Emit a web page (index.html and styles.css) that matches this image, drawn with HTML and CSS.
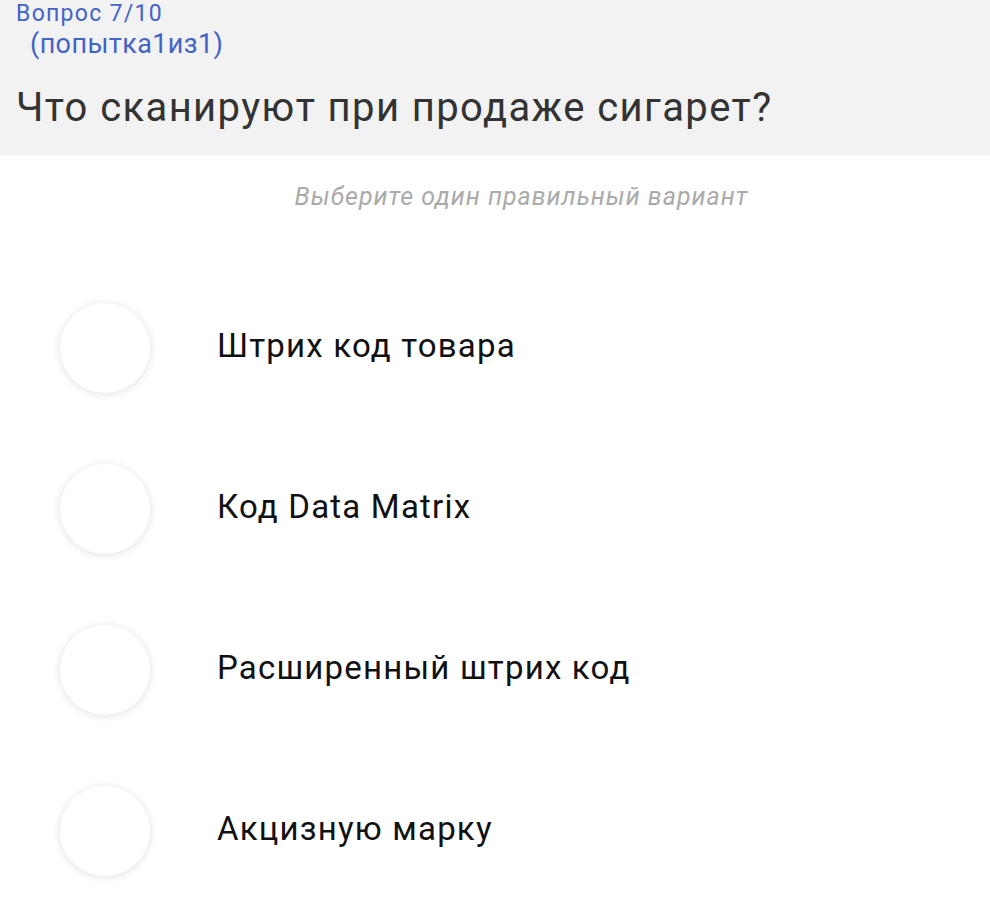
FILE: index.html
```html
<!DOCTYPE html>
<html lang="ru">
  <head>
    <meta charset="UTF-8" />
    <meta name="viewport" content="width=device-width, initial-scale=1.0" />
    <title>Вопрос 7/10</title>
    <link rel="stylesheet" href="styles.css">
  </head>
  <body>
    <header class="questionHead">
      <div class="counter">Вопрос 7/10</div>
      <div class="attempt">(попытка1из1)</div>
      <h1 class="questionText">Что сканируют при продаже сигарет?</h1>
    </header>
    <p class="hint">Выберите один правильный вариант</p>
    <ul class="answers">
      <li class="answer"><span class="radio"></span><span class="label">Штрих код товара</span></li>
      <li class="answer"><span class="radio"></span><span class="label">Код Data Matrix</span></li>
      <li class="answer"><span class="radio"></span><span class="label">Расширенный штрих код</span></li>
      <li class="answer"><span class="radio"></span><span class="label">Акцизную марку</span></li>
    </ul>
  </body>
</html>
```

FILE: styles.css
```css
body {
  margin: 0;
  font-family: Roboto, "Noto Sans", sans-serif;
  background: #fff;
}
.questionHead {
  background: #f2f2f2;
  height: 155px;
  padding: 0 16px;
  box-sizing: border-box;
}
.counter {
  color: #4363c7;
  font-size: 23px;
  line-height: 27px;
  letter-spacing: 1.3px;
}
.attempt {
  color: #4363c7;
  font-size: 27px;
  line-height: 32px;
  padding-top: 1px;
  padding-left: 14px;
  letter-spacing: 0.4px;
}
.questionText {
  margin: 0;
  padding-top: 24px;
  font-size: 40px;
  font-weight: normal;
  line-height: 48px;
  letter-spacing: 1.4px;
  color: #333;
}
.hint {
  margin: 25px 0 0 0;
  text-align: center;
  padding-left: 53px;
  color: #aaa;
  font-style: italic;
  font-size: 25px;
  line-height: 34px;
  letter-spacing: 1px;
}
.answers {
  list-style: none;
  margin: 53px 0 0 0;
  padding: 0;
}
.answer {
  display: flex;
  align-items: center;
  height: 161px;
  padding-left: 60px;
}
.radio {
  width: 90px;
  height: 90px;
  border-radius: 50%;
  background: #fff;
  box-shadow: 0 1px 8px rgba(0, 0, 0, 0.12);
  flex-shrink: 0;
}
.label {
  margin-left: 67px;
  margin-top: -4px;
  font-size: 33px;
  letter-spacing: 1.2px;
  color: #111;
}
```
